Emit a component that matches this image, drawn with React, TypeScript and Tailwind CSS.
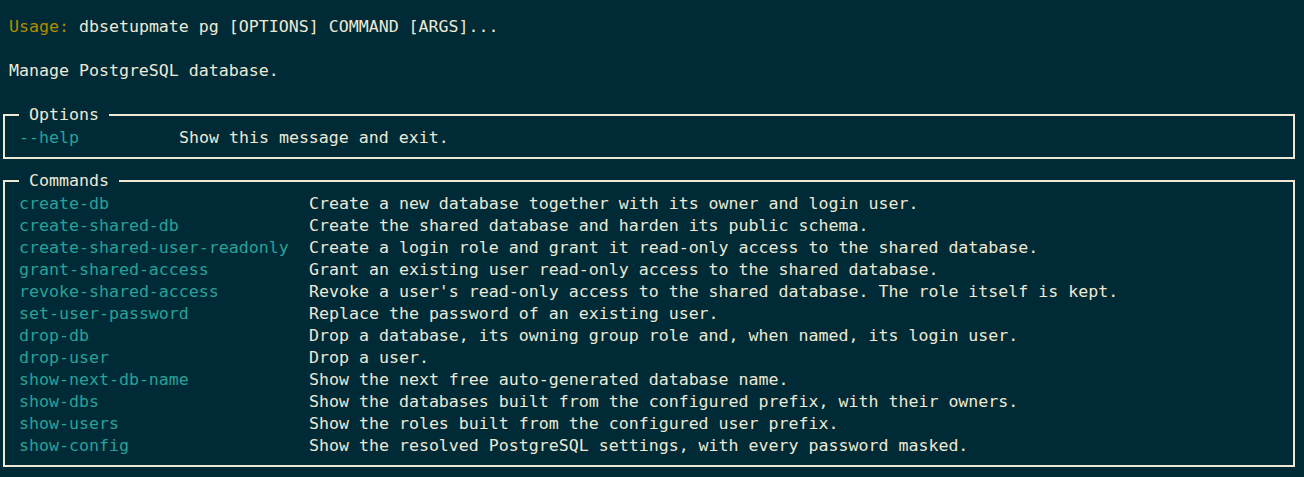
import React from "react";

const commands: [string, string][] = [
  ["create-db", "Create a new database together with its owner and login user."],
  ["create-shared-db", "Create the shared database and harden its public schema."],
  ["create-shared-user-readonly", "Create a login role and grant it read-only access to the shared database."],
  ["grant-shared-access", "Grant an existing user read-only access to the shared database."],
  ["revoke-shared-access", "Revoke a user's read-only access to the shared database. The role itself is kept."],
  ["set-user-password", "Replace the password of an existing user."],
  ["drop-db", "Drop a database, its owning group role and, when named, its login user."],
  ["drop-user", "Drop a user."],
  ["show-next-db-name", "Show the next free auto-generated database name."],
  ["show-dbs", "Show the databases built from the configured prefix, with their owners."],
  ["show-users", "Show the roles built from the configured user prefix."],
  ["show-config", "Show the resolved PostgreSQL settings, with every password masked."],
];

function Box({ title, children }: { title: string; children: React.ReactNode }) {
  return (
    <fieldset className="ml-[3px] mr-[9px] border-2 border-[#eee8d5] pl-[14px] pt-[1px] pb-[8px]">
      <legend className="px-[10px] leading-[22px]">{title}</legend>
      {children}
    </fieldset>
  );
}

export default function App() {
  return (
    <div
      className="min-h-screen w-full bg-[#002b36] pt-[16px] text-[16.6px] leading-[22px] text-[#eee8d5] whitespace-pre"
      style={{ fontFamily: '"DejaVu Sans Mono", "Liberation Mono", monospace' }}
    >
      <div className="pl-[9px]">
        <span className="text-[#b58900]">Usage:</span> dbsetupmate pg [OPTIONS] COMMAND [ARGS]...
      </div>
      <div className="h-[22px]" />
      <div className="pl-[9px]">Manage PostgreSQL database.</div>
      <div className="h-[22px]" />
      <Box title="Options">
        <div className="flex">
          <div className="w-[160px] text-[#2aa198]">--help</div>
          <div>Show this message and exit.</div>
        </div>
      </Box>
      <div className="h-[11px]" />
      <Box title="Commands">
        <div className="grid grid-cols-[290px_1fr]">
          {commands.map(([c, d]) => (
            <React.Fragment key={c}>
              <div className="text-[#2aa198]">{c}</div>
              <div>{d}</div>
            </React.Fragment>
          ))}
        </div>
      </Box>
    </div>
  );
}
